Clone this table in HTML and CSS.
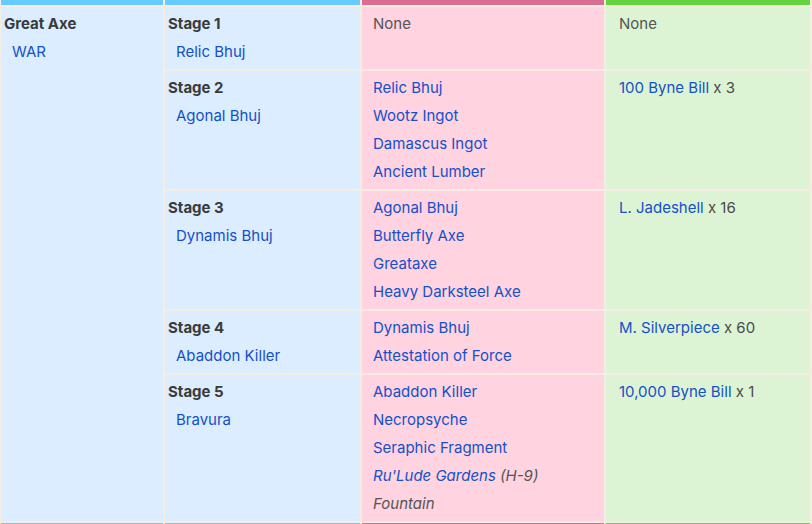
FILE: index.html
```html
<!DOCTYPE html>
<html>
<head>
<meta charset="utf-8">
<link rel="stylesheet" href="styles.css">
</head>
<body>
<div class="table">
  <div class="bar bar-blue"></div>
  <div class="bar bar-blue"></div>
  <div class="bar bar-pink"></div>
  <div class="bar bar-green"></div>

  <div class="cell weapon">
    <div class="title">Great Axe</div>
    <div class="sub"><a>WAR</a></div>
  </div>

  <div class="cell stage r1"><div class="title">Stage 1</div><div class="sub"><a>Relic Bhuj</a></div></div>
  <div class="cell mats r1"><div class="plain">None</div></div>
  <div class="cell cost r1"><div class="plain">None</div></div>

  <div class="cell stage"><div class="title">Stage 2</div><div class="sub"><a>Agonal Bhuj</a></div></div>
  <div class="cell mats">
    <div><a>Relic Bhuj</a></div>
    <div><a>Wootz Ingot</a></div>
    <div><a>Damascus Ingot</a></div>
    <div><a>Ancient Lumber</a></div>
  </div>
  <div class="cell cost"><div><a>100 Byne Bill</a> x 3</div></div>

  <div class="cell stage"><div class="title">Stage 3</div><div class="sub"><a>Dynamis Bhuj</a></div></div>
  <div class="cell mats">
    <div><a>Agonal Bhuj</a></div>
    <div><a>Butterfly Axe</a></div>
    <div><a>Greataxe</a></div>
    <div><a>Heavy Darksteel Axe</a></div>
  </div>
  <div class="cell cost"><div><a>L. Jadeshell</a> x 16</div></div>

  <div class="cell stage"><div class="title">Stage 4</div><div class="sub"><a>Abaddon Killer</a></div></div>
  <div class="cell mats">
    <div><a>Dynamis Bhuj</a></div>
    <div><a>Attestation of Force</a></div>
  </div>
  <div class="cell cost"><div><a>M. Silverpiece</a> x 60</div></div>

  <div class="cell stage"><div class="title">Stage 5</div><div class="sub"><a>Bravura</a></div></div>
  <div class="cell mats">
    <div><a>Abaddon Killer</a></div>
    <div><a>Necropsyche</a></div>
    <div><a>Seraphic Fragment</a></div>
    <div class="it"><a>Ru'Lude Gardens</a> (H-9)</div>
    <div class="it">Fountain</div>
  </div>
  <div class="cell cost"><div><a>10,000 Byne Bill</a> x 1</div></div>

  <div class="bar bar-blue"></div>
  <div class="bar bar-blue"></div>
  <div class="bar bar-pink"></div>
  <div class="bar bar-green"></div>
</div>
</body>
</html>
```
FILE: styles.css
```css
html, body {
  margin: 0;
  padding: 0;
  background: #f5ede4;
}
body {
  font-family: Inter, "Open Sans", "Liberation Sans", sans-serif;
  font-size: 15px;
  color: #4a4a4a;
}
.table {
  display: grid;
  grid-template-columns: 162px 195px 242px 204px;
  grid-template-rows: 5px 62px 118px 118px 62px 146px 5px;
  gap: 2px;
  padding-left: 1px;
  background: #f5ede4;
}
.bar { height: 5px; }
.bar-blue { background: #66cbff; }
.bar-pink { background: #da6e92; }
.bar-green { background: #62d43e; }
.cell {
  line-height: 28px;
  padding: 3px 3px;
}
.weapon {
  grid-row: 2 / 7;
  background: #dbedff;
}
.stage { background: #dbedff; }
.mats { background: #ffd3df; padding-left: 11px; }
.cost { background: #dcf4d4; padding-left: 13px; }
.title { font-weight: 700; color: #3a3a3a; }
.sub { padding-left: 8px; }
a { color: #1550c8; text-decoration: none; }
.plain { color: #555; }
.it { font-style: italic; color: #555; }
```
